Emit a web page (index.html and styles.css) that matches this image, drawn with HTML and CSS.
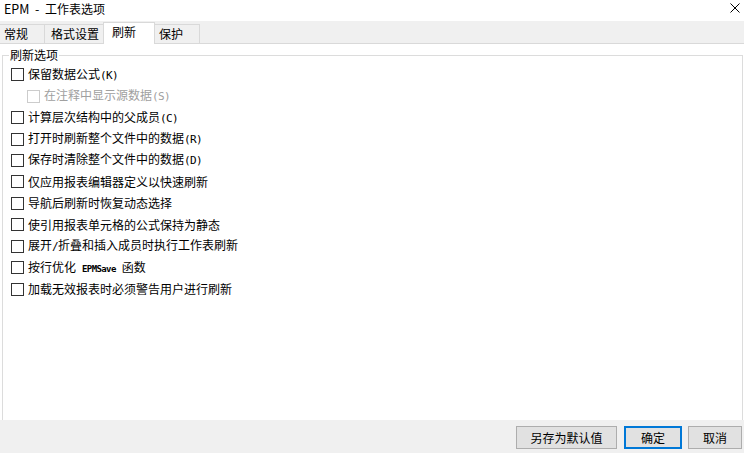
FILE: index.html
```html
<!DOCTYPE html>
<html lang="zh-CN">
<head>
<meta charset="utf-8">
<title>EPM - 工作表选项</title>
<link rel="stylesheet" href="styles.css">
</head>
<body>
<div class="dialog">
  <div class="titlebar">
    <span class="title"><span class="latin">EPM&nbsp;&nbsp;-&nbsp;&nbsp;</span>工作表选项</span>
    <svg class="close" width="10" height="10" viewBox="0 0 10 10"><path d="M0.5 0.5 L9.5 9.5 M9.5 0.5 L0.5 9.5" stroke="#000" stroke-width="1" fill="none"/></svg>
  </div>
  <div class="tabs">
    <div class="tab tab-general">常规</div>
    <div class="tab tab-format">格式设置</div>
    <div class="tab tab-refresh active">刷新</div>
    <div class="tab tab-protect">保护</div>
  </div>
  <div class="panel">
    <fieldset class="group">
      <legend>刷新选项</legend>
      <div class="row"><span class="cb"></span><span class="lbl">保留数据公式<span class="mn">(K)</span></span></div>
      <div class="row sub disabled"><span class="cb"></span><span class="lbl">在注释中显示源数据<span class="mn">(S)</span></span></div>
      <div class="row"><span class="cb"></span><span class="lbl">计算层次结构中的父成员<span class="mn">(C)</span></span></div>
      <div class="row"><span class="cb"></span><span class="lbl">打开时刷新整个文件中的数据<span class="mn">(R)</span></span></div>
      <div class="row"><span class="cb"></span><span class="lbl">保存时清除整个文件中的数据<span class="mn">(D)</span></span></div>
      <div class="row"><span class="cb"></span><span class="lbl">仅应用报表编辑器定义以快速刷新</span></div>
      <div class="row"><span class="cb"></span><span class="lbl">导航后刷新时恢复动态选择</span></div>
      <div class="row"><span class="cb"></span><span class="lbl">使引用报表单元格的公式保持为静态</span></div>
      <div class="row"><span class="cb"></span><span class="lbl">展开<span class="mn">/</span>折叠和插入成员时执行工作表刷新</span></div>
      <div class="row"><span class="cb"></span><span class="lbl">按行优化<span class="sp"></span><span class="mn small">EPMSave</span><span class="sp"></span>函数</span></div>
      <div class="row"><span class="cb"></span><span class="lbl">加载无效报表时必须警告用户进行刷新</span></div>
    </fieldset>
  </div>
  <div class="footer">
    <button class="btn btn-save">另存为默认值</button>
    <button class="btn btn-ok">确定</button>
    <button class="btn btn-cancel">取消</button>
  </div>
</div>
</body>
</html>
```

FILE: styles.css
```css
html, body {
  margin: 0;
  padding: 0;
}
body {
  width: 744px;
  height: 453px;
  overflow: hidden;
  background: #f0f0f0;
  font-family: "Noto Sans CJK SC", "Microsoft YaHei", sans-serif;
  font-size: 12px;
  color: #000;
}
.dialog {
  display: flex;
  flex-direction: column;
  height: 453px;
}
.titlebar {
  height: 21px;
  background: #fff;
  display: flex;
  align-items: flex-start;
  justify-content: space-between;
  box-sizing: border-box;
  padding: 1px 4px 0 4px;
}
.title {
  line-height: 16px;
  color: #000;
}
.title .latin {
  font-size: 12.5px;
}
.close {
  margin-top: 2px;
  margin-right: 0;
}
.tabs {
  height: 22px;
  display: flex;
  align-items: flex-end;
  position: relative;
  z-index: 1;
}
.tab {
  box-sizing: border-box;
  height: 19px;
  border: 1px solid #d9d9d9;
  border-bottom: none;
  background: #f0f0f0;
  line-height: 18px;
  margin-left: -1px;
  white-space: nowrap;
}
.tab-general { width: 46px; padding-left: 4px; margin-left: -1px; }
.tab-format { width: 60px; padding-left: 6px; }
.tab-refresh { width: 52px; padding-left: 8px; }
.tab-protect { width: 46px; padding-left: 4px; }
.tab.active {
  height: 22px;
  margin-bottom: -1px;
  background: #fff;
  line-height: 18px;
  position: relative;
}
.panel {
  flex: 1;
  background: #fff;
  border-top: 1px solid #d9d9d9;
  display: flex;
  flex-direction: column;
  overflow: hidden;
}
.group {
  flex: 1;
  margin: 3px 1px 0 2px;
  padding: 1px 0 0 8px;
  border: 1px solid #dcdcdc;
  border-bottom: none;
  min-width: 0;
}
.group legend {
  padding: 0 1px;
  margin-left: -2px;
  line-height: 16px;
}
.row {
  height: 21.45px;
  display: flex;
  align-items: center;
}
.cb {
  box-sizing: border-box;
  width: 13px;
  height: 13px;
  border: 1px solid #333;
  background: #fff;
  flex: none;
}
.lbl {
  margin-left: 4px;
  white-space: nowrap;
  line-height: 16px;
}
.sub {
  padding-left: 16px;
}
.disabled .cb {
  border-color: #cccccc;
}
.disabled .lbl {
  color: #a0a0a0;
}
.mn {
  font-family: "DejaVu Sans Mono", monospace;
  font-size: 11px;
  letter-spacing: -0.6px;
}
.mn.small {
  font-size: 9px;
  font-weight: bold;
  letter-spacing: -0.6px;
}
.sp {
  display: inline-block;
  width: 6px;
}
.footer {
  height: 33px;
  display: flex;
  justify-content: flex-end;
  align-items: flex-start;
  box-sizing: border-box;
  padding: 6px 2px 0 0;
}
.btn {
  box-sizing: border-box;
  height: 23px;
  background: #e1e1e1;
  border: 1px solid #adadad;
  font-family: "Noto Sans CJK SC", sans-serif;
  font-size: 12px;
  color: #000;
  padding: 0;
  line-height: 20px;
}
.btn-save { width: 101px; }
.btn-ok { width: 58px; margin-left: 7px; border: 2px solid #0078d7; }
.btn-cancel { width: 54px; margin-left: 6px; }
```
